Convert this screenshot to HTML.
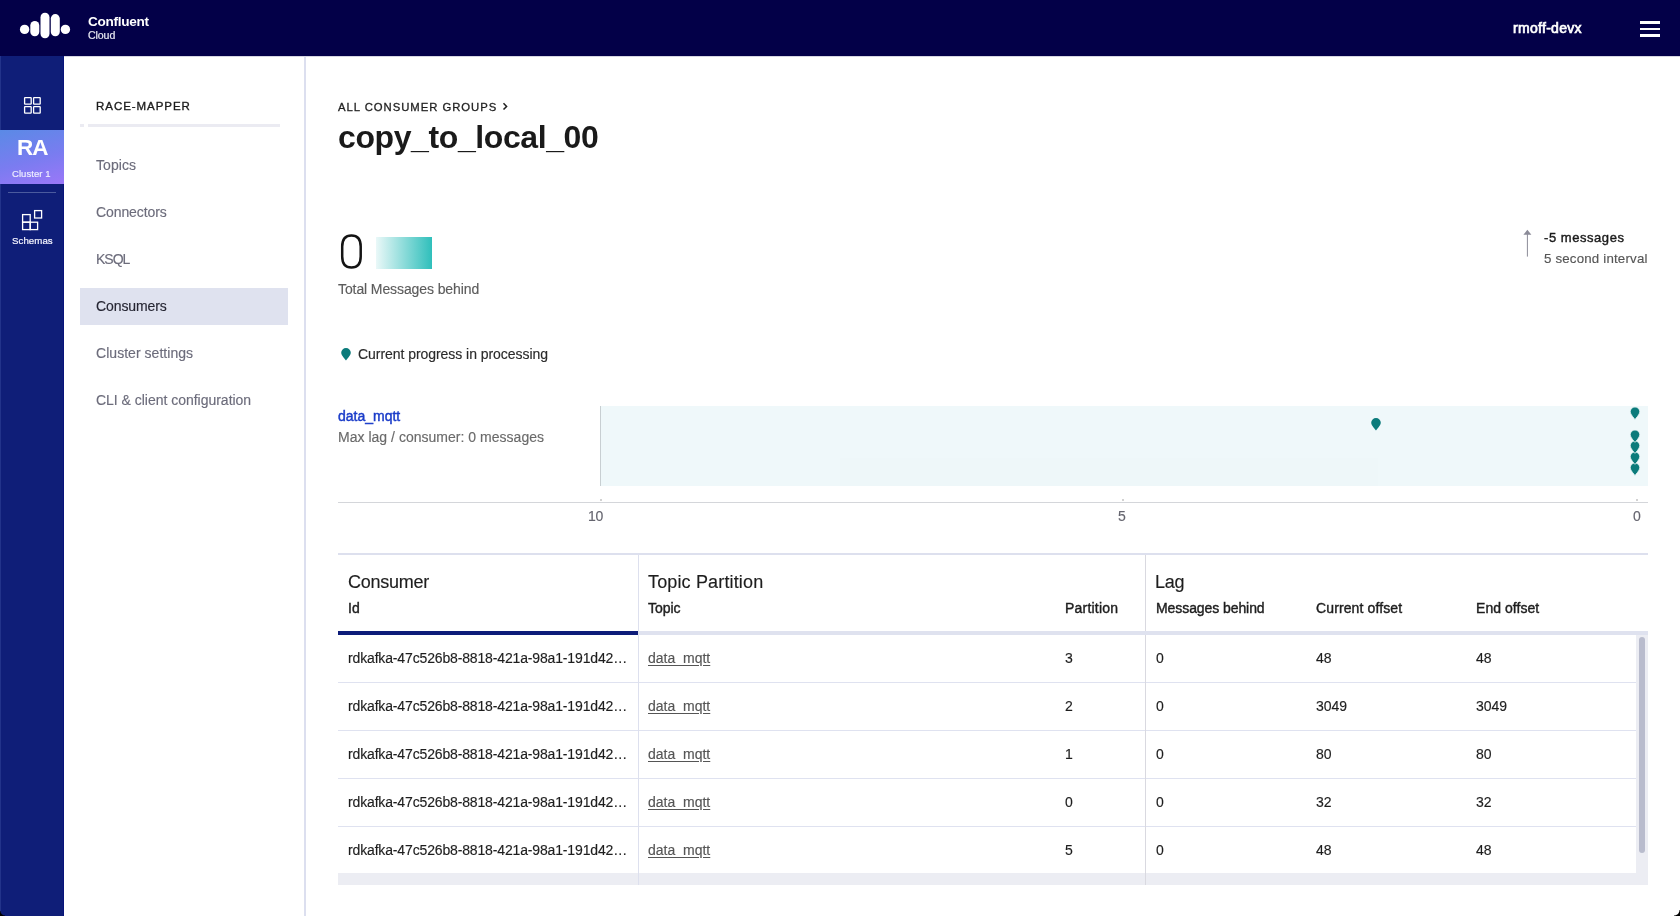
<!DOCTYPE html>
<html><head><meta charset="utf-8"><title>copy_to_local_00</title>
<style>
html,body{margin:0;padding:0;width:1680px;height:916px;overflow:hidden;background:#fff;}
body{position:relative;font-family:"Liberation Sans",sans-serif;}
.t{position:absolute;white-space:nowrap;will-change:transform;}
.b{position:absolute;}
</style></head><body>
<div class="b" style="left:0px;top:0px;width:1680px;height:56px;background:#030048;"></div>
<svg class="b" style="left:0;top:0" width="80" height="56" viewBox="0 0 80 56">
<g fill="#fff">
<circle cx="24.6" cy="29.4" r="4.7"/>
<rect x="30.3" y="20.9" width="9" height="15.3" rx="4.5"/>
<rect x="40.5" y="12.8" width="9" height="25.5" rx="4.5"/>
<rect x="50.8" y="14.1" width="9" height="22.1" rx="4.5"/>
<circle cx="65.4" cy="29.4" r="4.7"/>
</g></svg>
<div class="t" style="left:88.20px;top:14.80px;font-size:13.6px;line-height:13.6px;font-weight:700;color:#fff;letter-spacing:-0.3px;">Confluent</div>
<div class="t" style="left:88.40px;top:29.90px;font-size:10.6px;line-height:10.6px;font-weight:400;color:#e8e8f2;letter-spacing:-0.1px;-webkit-text-stroke:0.2px #e8e8f2;">Cloud</div>
<div class="t" style="left:1513.40px;top:21.30px;font-size:14px;line-height:14px;font-weight:400;color:#fff;letter-spacing:0.3px;-webkit-text-stroke:0.7px #fff;">rmoff-devx</div>
<div class="b" style="left:1640px;top:21px;width:20px;height:2.6px;background:#fff;"></div>
<div class="b" style="left:1640px;top:27.5px;width:20px;height:2.6px;background:#fff;"></div>
<div class="b" style="left:1640px;top:34px;width:20px;height:2.6px;background:#fff;"></div>
<div class="b" style="left:0px;top:56px;width:64px;height:860px;background:#0f1e78;"></div>
<div class="b" style="left:63px;top:56px;width:1px;height:860px;background:#08137a;"></div>
<div class="b" style="left:0px;top:56px;width:1px;height:860px;background:#22338a;"></div>
<svg class="b" style="left:0;top:56px" width="64" height="200" viewBox="0 0 64 200">
<g fill="none" stroke="#fff" stroke-width="1.3">
<rect x="24.6" y="41.6" width="6.6" height="6.6" rx="0.5"/>
<rect x="33.6" y="41.6" width="6.6" height="6.6" rx="0.5"/>
<rect x="24.6" y="50.6" width="6.6" height="6.6" rx="0.5"/>
<rect x="33.6" y="50.6" width="6.6" height="6.6" rx="0.5"/>
</g>
<g fill="none" stroke="#fff" stroke-width="1.3">
<rect x="34.6" y="154.6" width="7" height="7.4"/>
<rect x="22.6" y="158.6" width="7.6" height="7.6"/>
<rect x="22.6" y="166.2" width="7.6" height="7.4"/>
<rect x="30.2" y="166.2" width="7.4" height="7.4"/>
</g>
</svg>
<div class="b" style="left:0px;top:130px;width:64px;height:54px;background:linear-gradient(165deg,#5a8ae6 0%,#7a7cf0 55%,#9b77f8 100%);"></div>
<div class="t" style="left:17.10px;top:137.25px;font-size:22.5px;line-height:22.5px;font-weight:700;color:#fff;letter-spacing:-0.9px;">RA</div>
<div class="t" style="left:12.40px;top:168.95px;font-size:9.5px;line-height:9.5px;font-weight:400;color:#f0f0ff;letter-spacing:0.05px;-webkit-text-stroke:0.15px #f0f0ff;">Cluster 1</div>
<div class="b" style="left:8px;top:192px;width:48px;height:1px;background:#4b5a9e;"></div>
<div class="t" style="left:11.80px;top:235.85px;font-size:9.7px;line-height:9.7px;font-weight:400;color:#f4f4ff;letter-spacing:0.05px;-webkit-text-stroke:0.2px #f4f4ff;">Schemas</div>
<div class="b" style="left:64px;top:56px;width:240px;height:860px;background:#fff;"></div>
<div class="b" style="left:304px;top:56px;width:2px;height:860px;background:#dcdfef;"></div>
<div class="b" style="left:64px;top:56px;width:1616px;height:1px;background:#d6d6e2;"></div>
<div class="t" style="left:96.10px;top:100.55px;font-size:11.5px;line-height:11.5px;font-weight:400;color:#1c1c1c;letter-spacing:0.95px;-webkit-text-stroke:0.35px #1c1c1c;">RACE-MAPPER</div>
<div class="b" style="left:80px;top:123.5px;width:4px;height:3.5px;background:#ebebf2;"></div>
<div class="b" style="left:88px;top:123.5px;width:192px;height:3.5px;background:#ebebf2;"></div>
<div class="b" style="left:80px;top:288px;width:208px;height:37px;background:#dfe2ef;"></div>
<div class="t" style="left:96.10px;top:158.00px;font-size:14px;line-height:14px;font-weight:400;color:#6c6c7b;letter-spacing:0.05px;-webkit-text-stroke:0.15px #6c6c7b;">Topics</div>
<div class="t" style="left:96.10px;top:205.00px;font-size:14px;line-height:14px;font-weight:400;color:#6c6c7b;letter-spacing:-0.1px;-webkit-text-stroke:0.15px #6c6c7b;">Connectors</div>
<div class="t" style="left:96.10px;top:252.00px;font-size:14px;line-height:14px;font-weight:400;color:#6c6c7b;letter-spacing:-1.0px;-webkit-text-stroke:0.15px #6c6c7b;">KSQL</div>
<div class="t" style="left:96.10px;top:299.00px;font-size:14px;line-height:14px;font-weight:400;color:#262633;letter-spacing:-0.1px;-webkit-text-stroke:0.15px #262633;">Consumers</div>
<div class="t" style="left:96.10px;top:346.00px;font-size:14px;line-height:14px;font-weight:400;color:#6c6c7b;letter-spacing:0.04px;-webkit-text-stroke:0.15px #6c6c7b;">Cluster settings</div>
<div class="t" style="left:96.10px;top:393.00px;font-size:14px;line-height:14px;font-weight:400;color:#6c6c7b;letter-spacing:-0.02px;-webkit-text-stroke:0.15px #6c6c7b;">CLI &amp; client configuration</div>
<div class="t" style="left:338.20px;top:101.95px;font-size:11.3px;line-height:11.3px;font-weight:400;color:#1f1f1f;letter-spacing:0.97px;-webkit-text-stroke:0.3px #1f1f1f;">ALL CONSUMER GROUPS</div>
<svg class="b" style="left:500px;top:100px" width="12" height="14" viewBox="0 0 12 14"><path d="M3.5 3.2 L6.6 6.4 L3.5 9.6" fill="none" stroke="#1f1f1f" stroke-width="1.5"/></svg>
<div class="t" style="left:337.60px;top:121.30px;font-size:32px;line-height:32px;font-weight:700;color:#1a1a1a;letter-spacing:-0.4px;">copy_to_local_00</div>
<svg class="b" style="left:330px;top:225px" width="40" height="50" viewBox="330 225 40 50"><path d="M342.2,246.6 C342.2,239.56 345.53,235.6 351.45,235.6 C357.37,235.6 360.7,239.56 360.7,246.6 L360.7,256.6 C360.7,263.64000000000004 357.37,267.6 351.45,267.6 C345.53,267.6 342.2,263.64000000000004 342.2,256.6 Z" fill="none" stroke="#141414" stroke-width="2.5"/></svg>
<div class="b" style="left:376px;top:237px;width:56px;height:32px;background:linear-gradient(90deg,#eaf8f8 0%,#2fbfbb 100%);"></div>
<div class="t" style="left:338.10px;top:282.00px;font-size:14px;line-height:14px;font-weight:400;color:#5c5c5c;letter-spacing:-0.1px;-webkit-text-stroke:0.15px #5c5c5c;">Total Messages behind</div>
<svg class="b" style="left:1518px;top:226px" width="18" height="34" viewBox="0 0 18 34"><path d="M9.4 5 L9.4 30.6" stroke="#8b8b98" stroke-width="1"/><path d="M5.4 8.8 L9.4 3.8 L13.4 8.8 Z" fill="#8b8b98"/></svg>
<div class="t" style="left:1543.90px;top:231.00px;font-size:13px;line-height:13px;font-weight:400;color:#1a1a1a;letter-spacing:0.55px;-webkit-text-stroke:0.4px #1a1a1a;">-5 messages</div>
<div class="t" style="left:1543.90px;top:251.85px;font-size:13.3px;line-height:13.3px;font-weight:400;color:#565656;letter-spacing:0.18px;-webkit-text-stroke:0.15px #565656;">5 second interval</div>
<svg class="b" style="left:339.6px;top:347px" width="12" height="15" viewBox="-6 -1 12 15"><path d="M0 12.4 C-0.6 11.6 -4.8 7.4 -4.8 4.8 A4.8 4.8 0 0 1 4.8 4.8 C4.8 7.4 0.6 11.6 0 12.4 Z" fill="#0b7b7b"/></svg>
<div class="t" style="left:358.10px;top:346.70px;font-size:14px;line-height:14px;font-weight:400;color:#2a2a2a;letter-spacing:-0.05px;-webkit-text-stroke:0.15px #2a2a2a;">Current progress in processing</div>
<div class="t" style="left:338.10px;top:409.20px;font-size:14px;line-height:14px;font-weight:400;color:#1a3cc9;letter-spacing:0.0px;-webkit-text-stroke:0.45px #1a3cc9;">data_mqtt</div>
<div class="t" style="left:338.10px;top:430.00px;font-size:14px;line-height:14px;font-weight:400;color:#6a6a6a;letter-spacing:0.02px;-webkit-text-stroke:0.15px #6a6a6a;">Max lag / consumer: 0 messages</div>
<div class="b" style="left:600px;top:406px;width:1048px;height:80px;background:#eff8fa;"></div>
<div class="b" style="left:840px;top:458px;width:538px;height:28px;background:#eef7f9;"></div>
<div class="b" style="left:600px;top:406px;width:1px;height:80px;background:#c8cfd2;"></div>
<div class="b" style="left:338px;top:501.5px;width:1310px;height:1.2px;background:#d4d6da;"></div>
<div class="b" style="left:599.7px;top:499px;width:2px;height:2px;background:#d2d2d2;"></div>
<div class="b" style="left:1121.7px;top:499px;width:2px;height:2px;background:#d2d2d2;"></div>
<div class="b" style="left:1635.9px;top:499px;width:2px;height:2px;background:#d2d2d2;"></div>
<div class="t" style="left:587.60px;top:509.00px;font-size:14px;line-height:14px;font-weight:400;color:#65656f;letter-spacing:-0.2px;-webkit-text-stroke:0.15px #65656f;">10</div>
<div class="t" style="left:1117.60px;top:509.00px;font-size:14px;line-height:14px;font-weight:400;color:#65656f;letter-spacing:0px;-webkit-text-stroke:0.15px #65656f;">5</div>
<div class="t" style="left:1632.60px;top:509.00px;font-size:14px;line-height:14px;font-weight:400;color:#65656f;letter-spacing:0px;-webkit-text-stroke:0.15px #65656f;">0</div>
<svg class="b" style="left:1370.2px;top:417px" width="12" height="15" viewBox="-6 -1 12 15"><path d="M0 12.4 C-0.6 11.6 -4.8 7.4 -4.8 4.8 A4.8 4.8 0 0 1 4.8 4.8 C4.8 7.4 0.6 11.6 0 12.4 Z" fill="#0b7b7b"/></svg>
<svg class="b" style="left:1629.4px;top:405.8px" width="12" height="15" viewBox="-6 -1 12 15"><path d="M0 12.4 C-0.6 11.6 -4.8 7.4 -4.8 4.8 A4.8 4.8 0 0 1 4.8 4.8 C4.8 7.4 0.6 11.6 0 12.4 Z" fill="#0b7b7b" stroke="#eaf6f6" stroke-width="0.8"/></svg>
<svg class="b" style="left:1629.4px;top:462.0px" width="12" height="15" viewBox="-6 -1 12 15"><path d="M0 12.4 C-0.6 11.6 -4.8 7.4 -4.8 4.8 A4.8 4.8 0 0 1 4.8 4.8 C4.8 7.4 0.6 11.6 0 12.4 Z" fill="#0b7b7b" stroke="#eaf6f6" stroke-width="0.8"/></svg>
<svg class="b" style="left:1629.4px;top:451.0px" width="12" height="15" viewBox="-6 -1 12 15"><path d="M0 12.4 C-0.6 11.6 -4.8 7.4 -4.8 4.8 A4.8 4.8 0 0 1 4.8 4.8 C4.8 7.4 0.6 11.6 0 12.4 Z" fill="#0b7b7b" stroke="#eaf6f6" stroke-width="0.8"/></svg>
<svg class="b" style="left:1629.4px;top:440.0px" width="12" height="15" viewBox="-6 -1 12 15"><path d="M0 12.4 C-0.6 11.6 -4.8 7.4 -4.8 4.8 A4.8 4.8 0 0 1 4.8 4.8 C4.8 7.4 0.6 11.6 0 12.4 Z" fill="#0b7b7b" stroke="#eaf6f6" stroke-width="0.8"/></svg>
<svg class="b" style="left:1629.4px;top:429.0px" width="12" height="15" viewBox="-6 -1 12 15"><path d="M0 12.4 C-0.6 11.6 -4.8 7.4 -4.8 4.8 A4.8 4.8 0 0 1 4.8 4.8 C4.8 7.4 0.6 11.6 0 12.4 Z" fill="#0b7b7b" stroke="#eaf6f6" stroke-width="0.8"/></svg>
<div class="b" style="left:338px;top:553px;width:1310px;height:2px;background:#dde0ee;"></div>
<div class="b" style="left:638px;top:555px;width:1px;height:318px;background:#dde0ee;"></div>
<div class="b" style="left:1145px;top:555px;width:1px;height:318px;background:#d9d9e0;"></div>
<div class="b" style="left:338px;top:631px;width:300px;height:4px;background:#0d1c79;"></div>
<div class="b" style="left:638px;top:631px;width:1010px;height:4px;background:#dfe2ef;"></div>
<div class="t" style="left:348.10px;top:573.00px;font-size:18px;line-height:18px;font-weight:400;color:#1e1e1e;letter-spacing:-0.25px;-webkit-text-stroke:0.15px #1e1e1e;">Consumer</div>
<div class="t" style="left:648.10px;top:573.00px;font-size:18px;line-height:18px;font-weight:400;color:#1e1e1e;letter-spacing:0.15px;-webkit-text-stroke:0.15px #1e1e1e;">Topic Partition</div>
<div class="t" style="left:1155.10px;top:573.00px;font-size:18px;line-height:18px;font-weight:400;color:#1e1e1e;letter-spacing:-0.25px;-webkit-text-stroke:0.15px #1e1e1e;">Lag</div>
<div class="t" style="left:348.10px;top:601.00px;font-size:14px;line-height:14px;font-weight:400;color:#1e1e1e;letter-spacing:0px;-webkit-text-stroke:0.4px #1e1e1e;">Id</div>
<div class="t" style="left:648.10px;top:601.00px;font-size:14px;line-height:14px;font-weight:400;color:#1e1e1e;letter-spacing:-0.05px;-webkit-text-stroke:0.4px #1e1e1e;">Topic</div>
<div class="t" style="left:1064.60px;top:601.00px;font-size:14px;line-height:14px;font-weight:400;color:#1e1e1e;letter-spacing:0.2px;-webkit-text-stroke:0.4px #1e1e1e;">Partition</div>
<div class="t" style="left:1155.60px;top:601.00px;font-size:14px;line-height:14px;font-weight:400;color:#1e1e1e;letter-spacing:-0.08px;-webkit-text-stroke:0.4px #1e1e1e;">Messages behind</div>
<div class="t" style="left:1315.60px;top:601.00px;font-size:14px;line-height:14px;font-weight:400;color:#1e1e1e;letter-spacing:0.12px;-webkit-text-stroke:0.4px #1e1e1e;">Current offset</div>
<div class="t" style="left:1475.60px;top:601.00px;font-size:14px;line-height:14px;font-weight:400;color:#1e1e1e;letter-spacing:0.04px;-webkit-text-stroke:0.4px #1e1e1e;">End offset</div>
<div class="t" style="left:348.10px;top:651.00px;font-size:14px;line-height:14px;font-weight:400;color:#1e1e1e;letter-spacing:-0.15px;-webkit-text-stroke:0.15px #1e1e1e;">rdkafka-47c526b8-8818-421a-98a1-191d42…</div>
<div class="t" style="left:648.10px;top:651.00px;font-size:14px;line-height:14px;font-weight:400;color:#555;letter-spacing:0px;-webkit-text-stroke:0.15px #555;text-decoration:underline;text-underline-offset:1.5px;">data_mqtt</div>
<div class="t" style="left:1064.60px;top:651.00px;font-size:14px;line-height:14px;font-weight:400;color:#1e1e1e;letter-spacing:0px;-webkit-text-stroke:0.15px #1e1e1e;">3</div>
<div class="t" style="left:1155.60px;top:651.00px;font-size:14px;line-height:14px;font-weight:400;color:#1e1e1e;letter-spacing:0px;-webkit-text-stroke:0.15px #1e1e1e;">0</div>
<div class="t" style="left:1315.60px;top:651.00px;font-size:14px;line-height:14px;font-weight:400;color:#1e1e1e;letter-spacing:0px;-webkit-text-stroke:0.15px #1e1e1e;">48</div>
<div class="t" style="left:1475.60px;top:651.00px;font-size:14px;line-height:14px;font-weight:400;color:#1e1e1e;letter-spacing:0px;-webkit-text-stroke:0.15px #1e1e1e;">48</div>
<div class="b" style="left:338px;top:682px;width:300px;height:1px;background:#dfe2f0;"></div>
<div class="b" style="left:639px;top:682px;width:506px;height:1px;background:#dfe2f0;"></div>
<div class="b" style="left:1146px;top:682px;width:490px;height:1px;background:#dfe2f0;"></div>
<div class="t" style="left:348.10px;top:699.00px;font-size:14px;line-height:14px;font-weight:400;color:#1e1e1e;letter-spacing:-0.15px;-webkit-text-stroke:0.15px #1e1e1e;">rdkafka-47c526b8-8818-421a-98a1-191d42…</div>
<div class="t" style="left:648.10px;top:699.00px;font-size:14px;line-height:14px;font-weight:400;color:#555;letter-spacing:0px;-webkit-text-stroke:0.15px #555;text-decoration:underline;text-underline-offset:1.5px;">data_mqtt</div>
<div class="t" style="left:1064.60px;top:699.00px;font-size:14px;line-height:14px;font-weight:400;color:#1e1e1e;letter-spacing:0px;-webkit-text-stroke:0.15px #1e1e1e;">2</div>
<div class="t" style="left:1155.60px;top:699.00px;font-size:14px;line-height:14px;font-weight:400;color:#1e1e1e;letter-spacing:0px;-webkit-text-stroke:0.15px #1e1e1e;">0</div>
<div class="t" style="left:1315.60px;top:699.00px;font-size:14px;line-height:14px;font-weight:400;color:#1e1e1e;letter-spacing:0px;-webkit-text-stroke:0.15px #1e1e1e;">3049</div>
<div class="t" style="left:1475.60px;top:699.00px;font-size:14px;line-height:14px;font-weight:400;color:#1e1e1e;letter-spacing:0px;-webkit-text-stroke:0.15px #1e1e1e;">3049</div>
<div class="b" style="left:338px;top:730px;width:300px;height:1px;background:#dfe2f0;"></div>
<div class="b" style="left:639px;top:730px;width:506px;height:1px;background:#dfe2f0;"></div>
<div class="b" style="left:1146px;top:730px;width:490px;height:1px;background:#dfe2f0;"></div>
<div class="t" style="left:348.10px;top:747.00px;font-size:14px;line-height:14px;font-weight:400;color:#1e1e1e;letter-spacing:-0.15px;-webkit-text-stroke:0.15px #1e1e1e;">rdkafka-47c526b8-8818-421a-98a1-191d42…</div>
<div class="t" style="left:648.10px;top:747.00px;font-size:14px;line-height:14px;font-weight:400;color:#555;letter-spacing:0px;-webkit-text-stroke:0.15px #555;text-decoration:underline;text-underline-offset:1.5px;">data_mqtt</div>
<div class="t" style="left:1064.60px;top:747.00px;font-size:14px;line-height:14px;font-weight:400;color:#1e1e1e;letter-spacing:0px;-webkit-text-stroke:0.15px #1e1e1e;">1</div>
<div class="t" style="left:1155.60px;top:747.00px;font-size:14px;line-height:14px;font-weight:400;color:#1e1e1e;letter-spacing:0px;-webkit-text-stroke:0.15px #1e1e1e;">0</div>
<div class="t" style="left:1315.60px;top:747.00px;font-size:14px;line-height:14px;font-weight:400;color:#1e1e1e;letter-spacing:0px;-webkit-text-stroke:0.15px #1e1e1e;">80</div>
<div class="t" style="left:1475.60px;top:747.00px;font-size:14px;line-height:14px;font-weight:400;color:#1e1e1e;letter-spacing:0px;-webkit-text-stroke:0.15px #1e1e1e;">80</div>
<div class="b" style="left:338px;top:778px;width:300px;height:1px;background:#dfe2f0;"></div>
<div class="b" style="left:639px;top:778px;width:506px;height:1px;background:#dfe2f0;"></div>
<div class="b" style="left:1146px;top:778px;width:490px;height:1px;background:#dfe2f0;"></div>
<div class="t" style="left:348.10px;top:795.00px;font-size:14px;line-height:14px;font-weight:400;color:#1e1e1e;letter-spacing:-0.15px;-webkit-text-stroke:0.15px #1e1e1e;">rdkafka-47c526b8-8818-421a-98a1-191d42…</div>
<div class="t" style="left:648.10px;top:795.00px;font-size:14px;line-height:14px;font-weight:400;color:#555;letter-spacing:0px;-webkit-text-stroke:0.15px #555;text-decoration:underline;text-underline-offset:1.5px;">data_mqtt</div>
<div class="t" style="left:1064.60px;top:795.00px;font-size:14px;line-height:14px;font-weight:400;color:#1e1e1e;letter-spacing:0px;-webkit-text-stroke:0.15px #1e1e1e;">0</div>
<div class="t" style="left:1155.60px;top:795.00px;font-size:14px;line-height:14px;font-weight:400;color:#1e1e1e;letter-spacing:0px;-webkit-text-stroke:0.15px #1e1e1e;">0</div>
<div class="t" style="left:1315.60px;top:795.00px;font-size:14px;line-height:14px;font-weight:400;color:#1e1e1e;letter-spacing:0px;-webkit-text-stroke:0.15px #1e1e1e;">32</div>
<div class="t" style="left:1475.60px;top:795.00px;font-size:14px;line-height:14px;font-weight:400;color:#1e1e1e;letter-spacing:0px;-webkit-text-stroke:0.15px #1e1e1e;">32</div>
<div class="b" style="left:338px;top:826px;width:300px;height:1px;background:#dfe2f0;"></div>
<div class="b" style="left:639px;top:826px;width:506px;height:1px;background:#dfe2f0;"></div>
<div class="b" style="left:1146px;top:826px;width:490px;height:1px;background:#dfe2f0;"></div>
<div class="t" style="left:348.10px;top:843.00px;font-size:14px;line-height:14px;font-weight:400;color:#1e1e1e;letter-spacing:-0.15px;-webkit-text-stroke:0.15px #1e1e1e;">rdkafka-47c526b8-8818-421a-98a1-191d42…</div>
<div class="t" style="left:648.10px;top:843.00px;font-size:14px;line-height:14px;font-weight:400;color:#555;letter-spacing:0px;-webkit-text-stroke:0.15px #555;text-decoration:underline;text-underline-offset:1.5px;">data_mqtt</div>
<div class="t" style="left:1064.60px;top:843.00px;font-size:14px;line-height:14px;font-weight:400;color:#1e1e1e;letter-spacing:0px;-webkit-text-stroke:0.15px #1e1e1e;">5</div>
<div class="t" style="left:1155.60px;top:843.00px;font-size:14px;line-height:14px;font-weight:400;color:#1e1e1e;letter-spacing:0px;-webkit-text-stroke:0.15px #1e1e1e;">0</div>
<div class="t" style="left:1315.60px;top:843.00px;font-size:14px;line-height:14px;font-weight:400;color:#1e1e1e;letter-spacing:0px;-webkit-text-stroke:0.15px #1e1e1e;">48</div>
<div class="t" style="left:1475.60px;top:843.00px;font-size:14px;line-height:14px;font-weight:400;color:#1e1e1e;letter-spacing:0px;-webkit-text-stroke:0.15px #1e1e1e;">48</div>
<div class="b" style="left:1636px;top:635px;width:12px;height:238px;background:#ecedf3;"></div>
<div class="b" style="left:1638.5px;top:637px;width:6.5px;height:216px;background:#b9bccd;border-radius:3.5px;"></div>
<div class="b" style="left:338px;top:873px;width:1310px;height:12px;background:#ecedf3;"></div>
<div class="b" style="left:638px;top:873px;width:1px;height:12px;background:#dde0ee;"></div>
<div class="b" style="left:1145px;top:873px;width:1px;height:12px;background:#d9d9e0;"></div>
<div class="b" style="left:1674px;top:910px;width:6px;height:6px;background:radial-gradient(circle at 0 0, rgba(0,0,0,0) 5px, #000 6px);"></div>
<div class="b" style="left:0px;top:911px;width:5px;height:5px;background:radial-gradient(circle at 5px 0, rgba(0,0,0,0) 4px, #000 5px);"></div>
</body></html>
